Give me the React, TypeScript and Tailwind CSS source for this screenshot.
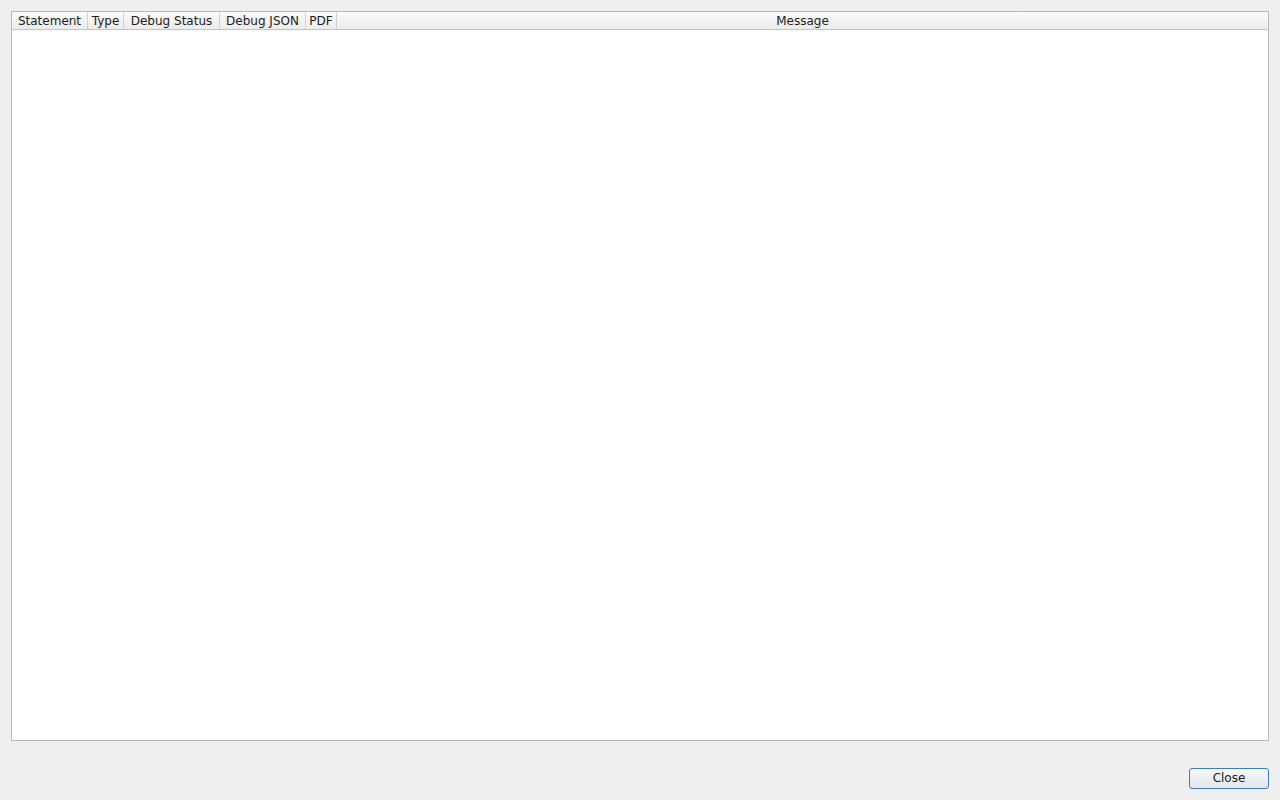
import React from 'react'

const columns = [
  { label: 'Statement', w: 'w-[76px]' },
  { label: 'Type', w: 'w-[36px]' },
  { label: 'Debug Status', w: 'w-[96px]' },
  { label: 'Debug JSON', w: 'w-[86px]' },
  { label: 'PDF', w: 'w-[31px]' },
]

export default function App() {
  return (
    <div
      className="h-[800px] w-full bg-[#efefef] px-[11px] pt-[11px] flex flex-col text-[12px] text-[#1c1c1c]"
      style={{ fontFamily: '"DejaVu Sans", sans-serif' }}
    >
      {/* results table */}
      <div className="h-[730px] border border-[#b9b9b9] bg-white flex flex-col">
        <div className="flex h-[18px] border-b border-[#c4c4c4] bg-gradient-to-b from-[#fafafa] to-[#ececec] leading-[19px] overflow-hidden">
          {columns.map(c => (
            <div key={c.label} className={`${c.w} shrink-0 border-r border-[#d2d2d2] text-center whitespace-nowrap`}>
              {c.label}
            </div>
          ))}
          <div className="flex-1 text-center">Message</div>
        </div>
        <div className="flex-1" />
      </div>

      <div className="flex justify-end mt-[27px]">
        <button className="w-[80px] h-[21px] rounded-[3px] border border-[#3f7cb3] bg-gradient-to-b from-[#f7f8fa] to-[#e3e6ea] text-[12px] leading-[19px] text-[#1c1c1c]">
          Close
        </button>
      </div>
    </div>
  )
}
